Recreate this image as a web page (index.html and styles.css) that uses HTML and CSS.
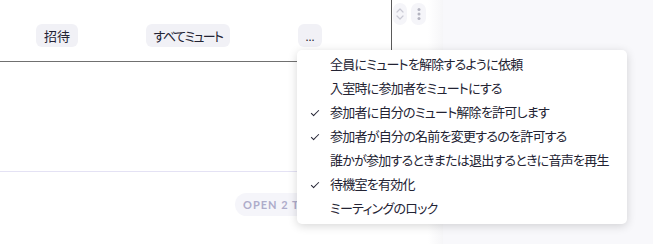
FILE: index.html
```html
<!DOCTYPE html>
<html lang="ja">
<head>
  <meta charset="UTF-8">
  <meta name="viewport" content="width=device-width, initial-scale=1.0">
  <title>参加者</title>
  <link rel="stylesheet" href="styles.css">
</head>
<body>

  <div class="main">
    <div class="panel">
      <div class="toolbar">
        <button class="pill-btn">招待</button>
        <button class="pill-btn kana">すべてミュート</button>
        <button class="pill-btn more">...</button>
      </div>
      <div class="list"></div>
      <div class="footer">
        <span class="tabs-pill">OPEN 2 TABS</span>
      </div>
    </div>

    <div class="side-tools">
      <button class="icon-btn">
        <svg viewBox="0 0 10 16" fill="none" stroke="#c9c9d4" stroke-width="1.2" stroke-linecap="round" stroke-linejoin="round">
          <path d="M2 6 L5 3 L8 6"/>
          <path d="M2 10 L5 13 L8 10"/>
        </svg>
      </button>
      <button class="icon-btn">
        <svg viewBox="0 0 10 16" fill="#b4b4c0">
          <circle cx="5" cy="3.5" r="1.5"/>
          <circle cx="5" cy="8" r="1.5"/>
          <circle cx="5" cy="12.5" r="1.5"/>
        </svg>
      </button>
    </div>

    <!-- ---------- menu ---------- -->
    <ul class="menu">
      <li>全員にミュートを解除するように依頼</li>
      <li>入室時に参加者をミュートにする</li>
      <li class="checked">参加者に自分のミュート解除を許可します</li>
      <li class="checked">参加者が自分の名前を変更するのを許可する</li>
      <li>誰かが参加するときまたは退出するときに音声を再生</li>
      <li class="checked">待機室を有効化</li>
      <li>ミーティングのロック</li>
    </ul>
  </div>

  <div class="aside"></div>

</body>
</html>
```

FILE: styles.css
```css
:root {
  --text-color: #232333;
  --btn-bg: #f1f1f6;
  --aside-bg: #f8f8fb;
}

* {
  box-sizing: border-box;
}

body {
  margin: 0;
  width: 653px;
  height: 244px;
  overflow: hidden;
  display: flex;
  background-color: #fff;
  color: var(--text-color);
  font-family: "Noto Sans CJK JP", "Noto Sans", sans-serif;
  font-feature-settings: "palt";
}

.main {
  position: relative;
  width: 443px;
  height: 100%;
  background: linear-gradient(to right, #fff 428px, #f6f6f8 443px);
}

.panel {
  width: 392px;
}

.toolbar {
  height: 62px;
  display: flex;
  align-items: flex-start;
  gap: 68px;
  padding: 24px 0 0 36px;
  border-right: 1px solid #5a5a5a;
  border-bottom: 1px solid #707070;
}

.pill-btn {
  height: 23px;
  padding: 0 8px;
  border: none;
  border-radius: 6px;
  background-color: var(--btn-bg);
  color: var(--text-color);
  font-family: inherit;
  font-feature-settings: "palt";
  font-size: 13px;
  line-height: 23px;
  white-space: nowrap;
}

.pill-btn.kana {
  width: 84px;
  padding: 0;
  letter-spacing: -1.6px;
}

.pill-btn.more {
  width: 24px;
  padding: 0;
  font-size: 11px;
  line-height: 20px;
}

.list {
  height: 110px;
  border-bottom: 1px solid #e4e2f4;
}

.footer {
  padding: 18px 0 0 235px;
}

.tabs-pill {
  display: inline-block;
  height: 23px;
  padding: 0 12px 0 8px;
  border-radius: 12px;
  background-color: #f5f5fa;
  color: #aeacca;
  font-family: "Lato", "Noto Sans", sans-serif;
  font-size: 11px;
  font-weight: bold;
  letter-spacing: 1px;
  line-height: 23px;
  white-space: nowrap;
}

.side-tools {
  position: absolute;
  top: 3px;
  left: 393px;
  display: flex;
  gap: 4px;
}

.icon-btn {
  width: 14px;
  height: 22px;
  padding: 3px 2px;
  border: none;
  border-radius: 7px;
  background-color: #f5f5f9;
  display: flex;
  align-items: center;
  justify-content: center;
}

.icon-btn svg {
  width: 10px;
  height: 16px;
}

.icon-btn + .icon-btn {
  width: 15px;
}

.menu {
  position: absolute;
  top: 50px;
  left: 297px;
  width: 330px;
  margin: 0;
  padding: 2px 0 4px;
  list-style: none;
  background-color: #fff;
  border-radius: 5px;
  box-shadow: 0 2px 10px rgba(0, 0, 0, 0.16);
  z-index: 10;
}

.menu li {
  position: relative;
  height: 24px;
  padding-left: 33px;
  font-size: 13px;
  line-height: 24px;
  letter-spacing: -0.75px;
  white-space: nowrap;
}

.menu li.checked::before {
  content: "";
  position: absolute;
  left: 16px;
  top: 8px;
  width: 3px;
  height: 7px;
  border-right: 1.5px solid var(--text-color);
  border-bottom: 1.5px solid var(--text-color);
  transform: rotate(45deg);
}

.aside {
  flex: 1;
  background-color: var(--aside-bg);
}
```
